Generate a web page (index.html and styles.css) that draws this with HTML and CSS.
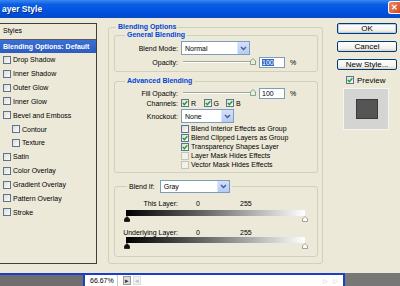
FILE: index.html
```html
<!DOCTYPE html>
<html lang="en">
<head>
    <meta charset="UTF-8">
    <meta name="viewport" content="width=device-width, initial-scale=1.0">
    <title>Layer Style</title>
    <link rel="stylesheet" href="styles.css">
</head>
<body>
    <div class="dialog">
        <!-- title bar -->
        <div class="titlebar">
            <span class="title">ayer Style</span>
            <span class="close">✕</span>
        </div>

        <div class="main">
            <!-- styles list -->
            <div class="styles-list">
                <div class="list-head">Styles</div>
                <div class="list-item active">Blending Options: Default</div>
                <div class="list-item"><span class="cb"></span>Drop Shadow</div>
                <div class="list-item"><span class="cb"></span>Inner Shadow</div>
                <div class="list-item"><span class="cb"></span>Outer Glow</div>
                <div class="list-item"><span class="cb"></span>Inner Glow</div>
                <div class="list-item"><span class="cb"></span>Bevel and Emboss</div>
                <div class="list-item sub"><span class="cb"></span>Contour</div>
                <div class="list-item sub"><span class="cb"></span>Texture</div>
                <div class="list-item"><span class="cb"></span>Satin</div>
                <div class="list-item"><span class="cb"></span>Color Overlay</div>
                <div class="list-item"><span class="cb"></span>Gradient Overlay</div>
                <div class="list-item"><span class="cb"></span>Pattern Overlay</div>
                <div class="list-item"><span class="cb"></span>Stroke</div>
            </div>

            <!-- blending options -->
            <fieldset class="group outer">
                <legend>Blending Options</legend>

                <fieldset class="group inner general">
                    <legend>General Blending</legend>
                    <div class="row tall">
                        <span class="lbl">Blend Mode:</span>
                        <div class="select mode">Normal<span class="drop"><svg width="7" height="5" viewBox="0 0 7 5"><path d="M1 1 L3.5 3.5 L6 1" stroke="#4d6185" stroke-width="1.5" fill="none"/></svg></span></div>
                    </div>
                    <div class="row num-row">
                        <span class="lbl">Opacity:</span>
                        <div class="slider"><span class="track"></span><svg class="knob" width="6" height="7" viewBox="0 0 6 7"><path d="M0.5 3 L3 0.5 L5.5 3 L5.5 6.5 L0.5 6.5 Z" fill="#e4efdc" stroke="#6b8f6b" stroke-width="0.8"/></svg></div>
                        <div class="num"><span class="sel">100</span></div>
                        <span class="pct">%</span>
                    </div>
                </fieldset>

                <fieldset class="group inner advanced">
                    <legend>Advanced Blending</legend>
                    <div class="row num-row">
                        <span class="lbl">Fill Opacity:</span>
                        <div class="slider"><span class="track"></span><svg class="knob" width="6" height="7" viewBox="0 0 6 7"><path d="M0.5 3 L3 0.5 L5.5 3 L5.5 6.5 L0.5 6.5 Z" fill="#e4efdc" stroke="#6b8f6b" stroke-width="0.8"/></svg></div>
                        <div class="num">100</div>
                        <span class="pct">%</span>
                    </div>
                    <div class="row channels">
                        <span class="lbl">Channels:</span>
                        <span class="ch"><span class="cb"><svg width="6" height="6" viewBox="0 0 6 6"><path d="M0.8 3 L2.4 4.6 L5.3 1.2" stroke="#21a121" stroke-width="1.4" fill="none"/></svg></span>R</span>
                        <span class="ch"><span class="cb"><svg width="6" height="6" viewBox="0 0 6 6"><path d="M0.8 3 L2.4 4.6 L5.3 1.2" stroke="#21a121" stroke-width="1.4" fill="none"/></svg></span>G</span>
                        <span class="ch"><span class="cb"><svg width="6" height="6" viewBox="0 0 6 6"><path d="M0.8 3 L2.4 4.6 L5.3 1.2" stroke="#21a121" stroke-width="1.4" fill="none"/></svg></span>B</span>
                    </div>
                    <div class="row tall">
                        <span class="lbl">Knockout:</span>
                        <div class="select knock">None<span class="drop"><svg width="7" height="5" viewBox="0 0 7 5"><path d="M1 1 L3.5 3.5 L6 1" stroke="#4d6185" stroke-width="1.5" fill="none"/></svg></span></div>
                    </div>
                    <div class="checks">
                        <div class="check"><span class="cb"></span>Blend Interior Effects as Group</div>
                        <div class="check"><span class="cb"><svg width="6" height="6" viewBox="0 0 6 6"><path d="M0.8 3 L2.4 4.6 L5.3 1.2" stroke="#21a121" stroke-width="1.4" fill="none"/></svg></span>Blend Clipped Layers as Group</div>
                        <div class="check"><span class="cb"><svg width="6" height="6" viewBox="0 0 6 6"><path d="M0.8 3 L2.4 4.6 L5.3 1.2" stroke="#21a121" stroke-width="1.4" fill="none"/></svg></span>Transparency Shapes Layer</div>
                        <div class="check"><span class="cb off"></span>Layer Mask Hides Effects</div>
                        <div class="check"><span class="cb off"></span>Vector Mask Hides Effects</div>
                    </div>
                </fieldset>

                <fieldset class="group inner blendif">
                    <legend><span>Blend If:</span><div class="select gray">Gray<span class="drop"><svg width="7" height="5" viewBox="0 0 7 5"><path d="M1 1 L3.5 3.5 L6 1" stroke="#4d6185" stroke-width="1.5" fill="none"/></svg></span></div></legend>
                    <div class="row range first">
                        <span class="lbl">This Layer:</span>
                        <span class="lo">0</span>
                        <span class="hi">255</span>
                    </div>
                    <div class="ramp"></div>
                    <div class="thumbs">
                        <svg width="6" height="6" viewBox="0 0 6 6"><path d="M3 0.5 L5.5 3 L5.5 5.5 L0.5 5.5 L0.5 3 Z" fill="#111" stroke="#111" stroke-width="0.8"/></svg>
                        <svg width="6" height="6" viewBox="0 0 6 6"><path d="M3 0.5 L5.5 3 L5.5 5.5 L0.5 5.5 L0.5 3 Z" fill="#fff" stroke="#8a8a8a" stroke-width="0.8"/></svg>
                    </div>
                    <div class="row range">
                        <span class="lbl">Underlying Layer:</span>
                        <span class="lo">0</span>
                        <span class="hi">255</span>
                    </div>
                    <div class="ramp second"></div>
                    <div class="thumbs">
                        <svg width="6" height="6" viewBox="0 0 6 6"><path d="M3 0.5 L5.5 3 L5.5 5.5 L0.5 5.5 L0.5 3 Z" fill="#111" stroke="#111" stroke-width="0.8"/></svg>
                        <svg width="6" height="6" viewBox="0 0 6 6"><path d="M3 0.5 L5.5 3 L5.5 5.5 L0.5 5.5 L0.5 3 Z" fill="#fff" stroke="#8a8a8a" stroke-width="0.8"/></svg>
                    </div>
                </fieldset>
            </fieldset>

            <!-- buttons -->
            <div class="buttons">
                <div class="btn default">OK</div>
                <div class="btn">Cancel</div>
                <div class="btn">New Style...</div>
                <div class="preview"><span class="cb"><svg width="6" height="6" viewBox="0 0 6 6"><path d="M0.8 3 L2.4 4.6 L5.3 1.2" stroke="#21a121" stroke-width="1.4" fill="none"/></svg></span>Preview</div>
                <div class="swatch"><span class="swatch-inner"></span></div>
            </div>
        </div>

        <!-- photoshop status bar -->
        <div class="status">
            <div class="s-left"></div>
            <div class="s-mid">
                <span class="zoomval">66.67%</span>
                <span class="sicon">▸</span>
                <span class="sicon dim">◂</span>
                <span class="s-fill"></span>
                <span class="sarrow">▷</span>
                <span class="sarrow">▷</span>
            </div>
            <div class="s-right"></div>
        </div>
    </div>
</body>
</html>
```

FILE: styles.css
```css
/* base */
* {
    margin: 0;
    padding: 0;
    box-sizing: border-box;
}

body {
    width: 400px;
    height: 286px;
    overflow: hidden;
    font-family: "Liberation Sans", Arial, sans-serif;
    font-size: 7px;
    color: #000;
    background-color: #ece9d8;
}

.dialog {
    display: flex;
    flex-direction: column;
    height: 286px;
}

/* title bar */
.titlebar {
    height: 18px;
    flex: none;
    display: flex;
    justify-content: space-between;
    align-items: center;
    background: linear-gradient(#3a86f2 0%, #0b5ee4 25%, #0052de 65%, #0448c8 100%);
    color: white;
}

.title {
    font-size: 8.5px;
    font-weight: bold;
    padding-left: 2px;
    text-shadow: 1px 1px 0 #0a2d8c;
}

.close {
    align-self: flex-start;
    width: 12px;
    height: 13px;
    margin-top: 1px;
    background: linear-gradient(135deg, #ec8a66, #d9461e);
    border: 1px solid #fff;
    border-right: none;
    border-radius: 3px 0 0 3px;
    font-size: 8px;
    font-weight: bold;
    display: flex;
    align-items: center;
    justify-content: center;
}

/* main area */
.main {
    height: 255px;
    flex: none;
    display: flex;
    align-items: flex-start;
}

/* styles list */
.styles-list {
    width: 97px;
    height: 241px;
    margin-top: 5px;
    border: 1px solid #3f3f3f;
    border-left: none;
}

.list-head {
    height: 16px;
    line-height: 13px;
    padding-left: 3px;
    border-bottom: 1px solid #5a5a5a;
}

.list-item {
    height: 13.85px;
    display: flex;
    align-items: center;
    padding-left: 3px;
}

.list-item.active {
    height: 13px;
    background: linear-gradient(#3b6fd4, #2c5cc2);
    color: white;
    font-weight: bold;
}

.list-item.sub {
    padding-left: 12px;
}

.list-item .cb {
    margin-right: 2px;
}

/* checkbox */
.cb {
    width: 8px;
    height: 8px;
    flex: none;
    display: inline-flex;
    align-items: center;
    justify-content: center;
    border: 1px solid #5b7396;
    background: linear-gradient(135deg, #dedcd3, #fbfbf8);
}

.cb.off {
    border-color: #c4c3b8;
    background: #f2f1ea;
}

/* group boxes */
.group {
    border: 1px solid #d0d0bf;
    border-radius: 3px;
    min-width: 0;
}

.group legend {
    line-height: 8px;
    padding: 0 2px;
    color: #0046d5;
    font-weight: bold;
}

.outer {
    width: 215px;
    margin-top: 5px;
    margin-left: 11px;
    padding: 0 4px 6px 5px;
}

.outer > legend {
    margin-left: 2px;
}

.inner > legend {
    margin-left: 10px;
}

.general {
    padding-bottom: 3px;
}

.advanced {
    margin-top: 5px;
    padding-bottom: 3px;
}

.blendif {
    margin-top: 7px;
    padding-bottom: 7px;
}

.blendif > legend {
    display: flex;
    align-items: center;
    gap: 5px;
    margin-left: 12px;
    color: #000;
    font-weight: normal;
    line-height: 13px;
}

/* rows */
.row {
    display: flex;
    align-items: center;
}

.lbl {
    width: 63px;
    text-align: right;
    margin-right: 3px;
    flex: none;
}

.row.tall {
    height: 14px;
    margin-top: 2px;
}

.row.num-row {
    height: 12px;
    margin-top: 1px;
}

.advanced .row.num-row {
    margin-top: 2px;
}

.row.channels {
    height: 8px;
}

.ch {
    width: 22.5px;
    display: flex;
    align-items: center;
    gap: 2px;
}

.ch:first-of-type {
    margin-left: 1px;
}

/* select */
.select {
    display: flex;
    align-items: center;
    justify-content: space-between;
    height: 14px;
    padding-left: 3px;
    background-color: white;
    border: 1px solid #7f9db9;
}

.select.mode {
    width: 69px;
}

.select.knock {
    width: 53px;
}

.select.gray {
    width: 70px;
    height: 13px;
}

.drop {
    width: 12px;
    height: 100%;
    display: flex;
    align-items: center;
    justify-content: center;
    background: linear-gradient(#d3e0fd, #b6cbf7);
    border-left: 1px solid #dbe5fb;
}

/* sliders */
.slider {
    position: relative;
    width: 73px;
    height: 12px;
    margin-left: 2px;
    display: flex;
    align-items: center;
}

.track {
    flex: 1;
    height: 2px;
    border-top: 1px solid #a3a3a0;
    border-bottom: 1px solid #fff;
}

.knob {
    position: absolute;
    right: 0;
    top: 2px;
}

.num {
    width: 26px;
    height: 11px;
    margin-left: 3px;
    padding-left: 2px;
    line-height: 9px;
    background-color: white;
    border: 1px solid #7f9db9;
}

.num .sel {
    background-color: #316ac5;
    color: white;
}

.pct {
    margin-left: 5px;
}

/* check list */
.checks {
    margin-top: 1px;
    padding-left: 66px;
}

.check {
    height: 9px;
    display: flex;
    align-items: center;
    gap: 2px;
}

/* blend if */
.range {
    height: 8px;
    margin-top: 6px;
}

.lo {
    margin-left: 15px;
    width: 44px;
}

.ramp {
    width: 179px;
    height: 6px;
    margin-top: 3px;
    margin-left: 11px;
    background: linear-gradient(to right, #000, #6a6a6a 45%, #fff);
}

.ramp.second {
    margin-top: 1px;
}

.thumbs {
    width: 184px;
    height: 6px;
    margin-left: 9px;
    display: flex;
    justify-content: space-between;
    align-items: flex-end;
}

/* right column */
.buttons {
    width: 60px;
    margin-top: 5px;
    margin-left: 14px;
    display: flex;
    flex-direction: column;
    font-size: 8px;
}

.btn {
    height: 11px;
    margin-bottom: 7px;
    display: flex;
    align-items: center;
    justify-content: center;
    border: 1px solid #003c74;
    border-radius: 2px;
    background: linear-gradient(#ffffff, #f3f2ec 70%, #d8d3c6);
}

.btn.default {
    box-shadow: inset 0 0 0 1px #b7cdf4;
}

.preview {
    height: 8px;
    margin-top: -1px;
    margin-left: 9px;
    display: flex;
    align-items: center;
    gap: 3px;
}

.swatch {
    width: 46px;
    height: 42px;
    margin-top: 4px;
    margin-left: 6px;
    display: flex;
    align-items: center;
    justify-content: center;
    background-color: #d4d4d2;
    border: 1px solid #f4f4f0;
}

.swatch-inner {
    width: 22px;
    height: 20px;
    margin-left: 2px;
    background-color: #555;
    border: 1px solid #3a3a3a;
}

/* status bar */
.status {
    height: 13px;
    flex: none;
    display: flex;
}

.s-left {
    width: 83px;
    background-color: #6e6e6e;
    border-top: 2px solid #1b3fc8;
}

.s-mid {
    width: 262px;
    display: flex;
    align-items: center;
    background-color: white;
    border: 2px solid #1b3fc8;
    border-bottom: none;
}

.zoomval {
    width: 33px;
    height: 11px;
    line-height: 11px;
    padding-left: 5px;
    border-right: 1px solid #c8c8c8;
}

.sicon {
    width: 8px;
    height: 9px;
    margin-left: 5px;
    font-size: 7px;
    line-height: 7px;
    text-align: center;
    color: #333;
    background-color: #dcdcdc;
    border: 1px solid #9a9a9a;
}

.sicon.dim {
    margin-left: 2px;
    color: #c0c0c0;
    background-color: #f2f2f2;
    border-color: #dedede;
}

.s-fill {
    flex: 1;
}

.sarrow {
    width: 10px;
    font-size: 6px;
    color: #c8c8c8;
}

.s-right {
    flex: 1;
    background-color: #777;
}
```
